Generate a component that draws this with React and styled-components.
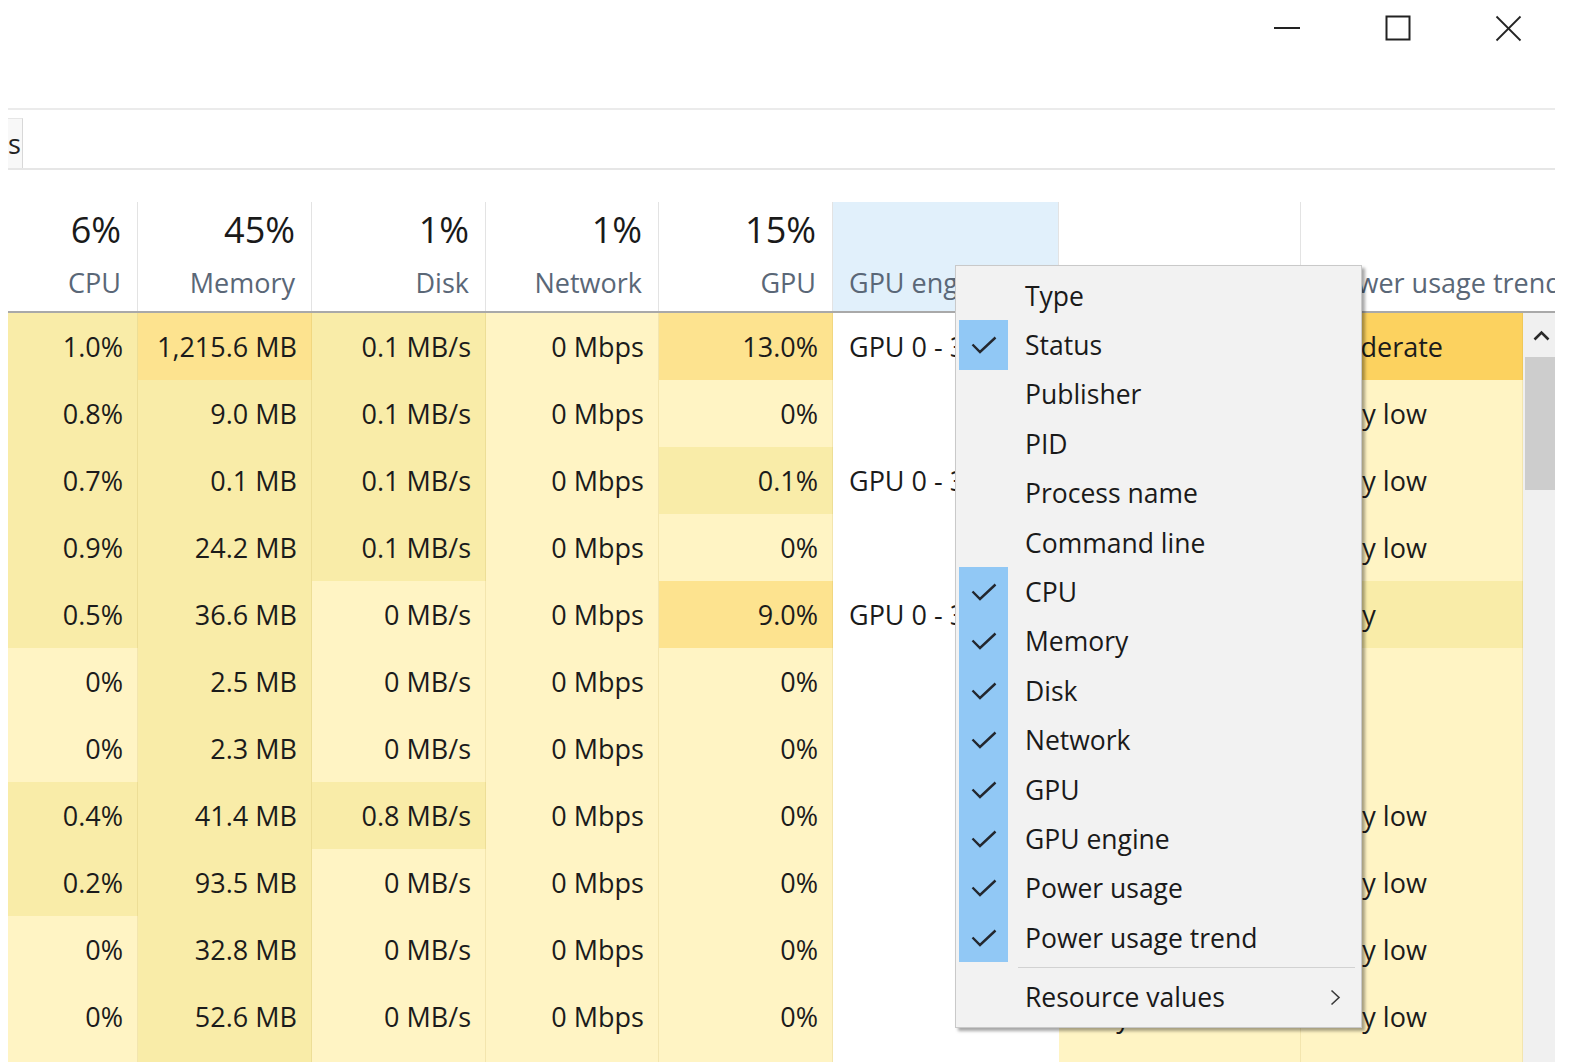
import React from "react";
import styled, { createGlobalStyle } from "styled-components";

const GlobalStyle = createGlobalStyle`
  html, body { margin: 0; padding: 0; background: #fff; width: 100%; height: 100%; overflow: hidden; }
  body { font-family: "Open Sans", "Noto Sans", sans-serif; color: #1b1b1b; }
  * { box-sizing: border-box; }
`;

const HEAT = ["#fff4c4", "#f9eca8", "#fde38f", "#fcd25f"];
const HEAD_COLS = "130px 174px 174px 173px 174px 226px 242px 254px";
const BODY_COLS = "130px 174px 174px 173px 174px 226px 242px 222px";

const Window = styled.div`
  position: relative;
  width: 1574px;
  height: 1062px;
  overflow: hidden;
  background: #fff;
`;

const TitleBar = styled.div`
  height: 108px;
  display: flex;
  justify-content: flex-end;
  align-items: flex-start;
  padding-right: 10px;
`;

const CaptionButton = styled.div`
  width: 111px;
  height: 56px;
  display: flex;
  align-items: center;
  justify-content: center;
  color: #1e1e1e;
`;

const Frame = styled.div`
  margin-left: 8px;
  width: 1547px;
`;

const Rule = styled.div`
  height: 2px;
  background: #ebebeb;
`;

const TabStrip = styled.div`
  height: 60px;
  padding-top: 8px;
  display: flex;
  border-bottom: 2px solid #e6e6e6;
`;

const Tab = styled.div`
  width: 15px;
  height: 50px;
  overflow: hidden;
  font-size: 27px;
  line-height: 50px;
  color: #222;
  background: #f8f8f8;
  border-right: 1px solid #d8d8d8;
  border-top: 1px solid #e6e6e6;
`;

const Header = styled.div`
  margin-top: 32px;
  display: grid;
  grid-template-columns: ${HEAD_COLS};
  height: 111px;
  border-bottom: 2px solid #a9a9a9;
  overflow: hidden;
`;

const HeaderCell = styled.div`
  display: flex;
  flex-direction: column;
  align-items: ${(p) => (p.$left ? "flex-start" : "flex-end")};
  padding: 6px ${(p) => (p.$left ? "0" : "16px")} 0 ${(p) => (p.$left ? p.$pad : 0)}px;
  border-right: ${(p) => (p.$last ? "none" : "1px solid #e3e3e3")};
  background: ${(p) => (p.$active ? "#e1f0fb" : "transparent")};
  overflow: hidden;
  white-space: nowrap;
`;

const Percent = styled.div`
  font-size: 36px;
  line-height: 44px;
  height: 44px;
  color: #1a1a1a;
`;

const Label = styled.div`
  font-size: 27px;
  line-height: 40px;
  margin-top: 11px;
  color: #5a6777;
`;

const Body = styled.div`
  display: flex;
`;

const Rows = styled.div`
  width: 1515px;
`;

const Row = styled.div`
  display: grid;
  grid-template-columns: ${BODY_COLS};
  height: 67px;
`;

const Cell = styled.div`
  display: flex;
  align-items: center;
  justify-content: ${(p) => (p.$left ? "flex-start" : "flex-end")};
  padding: 0 ${(p) => (p.$left ? 0 : 14)}px 0 ${(p) => (p.$left ? p.$pad : 0)}px;
  background: ${(p) => (p.$heat === null ? "#ffffff" : HEAT[p.$heat])};
  border-right: 1px solid ${(p) => (p.$heat === null ? "transparent" : "rgba(170, 145, 40, 0.14)")};
  font-size: 27px;
  color: #1b1b1b;
  white-space: nowrap;
  overflow: hidden;
`;

const Scrollbar = styled.div`
  width: 32px;
  background: #f0f0f0;
  display: flex;
  flex-direction: column;
  align-items: stretch;
`;

const ScrollArrow = styled.div`
  height: 44px;
  display: flex;
  align-items: center;
  justify-content: center;
  padding-left: 4px;
`;

const ScrollThumb = styled.div`
  height: 133px;
  margin-left: 2px;
  background: #cdcdcd;
`;

const Menu = styled.div`
  position: absolute;
  left: 955px;
  top: 265px;
  width: 407px;
  background: #f2f2f2;
  border: 1px solid #c9c9c9;
  box-shadow: 3px 3px 3px rgba(0, 0, 0, 0.35);
  padding: 5px 0 5px;
`;

const MenuItem = styled.div`
  height: 49.4px;
  display: flex;
  align-items: center;
  font-size: 26.5px;
  color: #1a1a1a;
`;

const CheckBox = styled.div`
  width: 49px;
  height: 100%;
  margin-left: 3px;
  background: ${(p) => (p.$on ? "#91c8f5" : "transparent")};
  display: flex;
  align-items: center;
  justify-content: center;
`;

const MenuLabel = styled.div`
  margin-left: 17px;
  flex: 1;
  white-space: nowrap;
`;

const SubArrow = styled.div`
  margin-right: 20px;
  display: flex;
  align-items: center;
`;

const MenuSeparator = styled.div`
  height: 10px;
  display: flex;
  align-items: center;
  padding: 0 6px 0 62px;
  &::after {
    content: "";
    flex: 1;
    height: 1px;
    background: #d2d2d2;
  }
`;

const columns = [
  { pct: "6%", label: "CPU" },
  { pct: "45%", label: "Memory" },
  { pct: "1%", label: "Disk" },
  { pct: "1%", label: "Network" },
  { pct: "15%", label: "GPU" },
  { label: "GPU engine", left: true, pad: 16, active: true },
  { label: "Power usage", left: true, pad: 15 },
  { label: "Power usage trend", left: true, pad: 19, headPad: 24, last: true },
];

const rows = [
  ["1.0%", "1,215.6 MB", "0.1 MB/s", "0 Mbps", "13.0%", "GPU 0 - 3D", "Low", "Moderate"],
  ["0.8%", "9.0 MB", "0.1 MB/s", "0 Mbps", "0%", "", "Very low", "Very low"],
  ["0.7%", "0.1 MB", "0.1 MB/s", "0 Mbps", "0.1%", "GPU 0 - 3D", "Very low", "Very low"],
  ["0.9%", "24.2 MB", "0.1 MB/s", "0 Mbps", "0%", "", "Very low", "Very low"],
  ["0.5%", "36.6 MB", "0 MB/s", "0 Mbps", "9.0%", "GPU 0 - 3D", "Very low", "Very"],
  ["0%", "2.5 MB", "0 MB/s", "0 Mbps", "0%", "", "", ""],
  ["0%", "2.3 MB", "0 MB/s", "0 Mbps", "0%", "", "", ""],
  ["0.4%", "41.4 MB", "0.8 MB/s", "0 Mbps", "0%", "", "Very low", "Very low"],
  ["0.2%", "93.5 MB", "0 MB/s", "0 Mbps", "0%", "", "Very low", "Very low"],
  ["0%", "32.8 MB", "0 MB/s", "0 Mbps", "0%", "", "Very low", "Very low"],
  ["0%", "52.6 MB", "0 MB/s", "0 Mbps", "0%", "", "Very low", "Very low"],
  ["0%", "3.1 MB", "0 MB/s", "0 Mbps", "0%", "", "Very low", "Very low"],
];

const heat = [
  [1, 2, 1, 0, 2, null, 0, 3],
  [1, 1, 1, 0, 0, null, 0, 0],
  [1, 1, 1, 0, 1, null, 0, 0],
  [1, 1, 1, 0, 0, null, 0, 0],
  [1, 1, 0, 0, 2, null, 0, 1],
  [0, 1, 0, 0, 0, null, 0, 0],
  [0, 1, 0, 0, 0, null, 0, 0],
  [1, 1, 1, 0, 0, null, 0, 0],
  [1, 1, 0, 0, 0, null, 0, 0],
  [0, 1, 0, 0, 0, null, 0, 0],
  [0, 1, 0, 0, 0, null, 0, 0],
  [0, 1, 0, 0, 0, null, 0, 0],
];

const menuItems = [
  ["Type", false],
  ["Status", true],
  ["Publisher", false],
  ["PID", false],
  ["Process name", false],
  ["Command line", false],
  ["CPU", true],
  ["Memory", true],
  ["Disk", true],
  ["Network", true],
  ["GPU", true],
  ["GPU engine", true],
  ["Power usage", true],
  ["Power usage trend", true],
];

const Check = () => (
  <svg width="26" height="18" viewBox="0 0 26 18">
    <polyline points="1.5,8.5 9,16 24.5,1.5" fill="none" stroke="#23272e" strokeWidth="2.4" />
  </svg>
);

export default function App() {
  return (
    <Window>
      <GlobalStyle />
      <TitleBar>
        <CaptionButton>
          <svg width="26" height="4" viewBox="0 0 26 4">
            <line x1="0" y1="2" x2="26" y2="2" stroke="#222" strokeWidth="2" />
          </svg>
        </CaptionButton>
        <CaptionButton>
          <svg width="26" height="26" viewBox="0 0 26 26">
            <rect x="1.5" y="1.5" width="23" height="23" fill="none" stroke="#222" strokeWidth="2" />
          </svg>
        </CaptionButton>
        <CaptionButton>
          <svg width="27" height="27" viewBox="0 0 27 27">
            <line x1="1.5" y1="1.5" x2="25.5" y2="25.5" stroke="#222" strokeWidth="1.8" />
            <line x1="25.5" y1="1.5" x2="1.5" y2="25.5" stroke="#222" strokeWidth="1.8" />
          </svg>
        </CaptionButton>
      </TitleBar>
      <Frame>
        <Rule />
        <TabStrip>
          <Tab>s</Tab>
        </TabStrip>
        <Header>
          {columns.map((c, i) => (
            <HeaderCell
              key={i}
              $left={c.left}
              $pad={c.headPad || c.pad}
              $active={c.active}
              $last={c.last}
            >
              <Percent>{c.pct || ""}</Percent>
              <Label>{c.label}</Label>
            </HeaderCell>
          ))}
        </Header>
        <Body>
          <Rows>
            {rows.map((r, ri) => (
              <Row key={ri}>
                {r.map((v, ci) => (
                  <Cell
                    key={ci}
                    $heat={heat[ri][ci]}
                    $left={columns[ci].left}
                    $pad={columns[ci].pad}
                  >
                    {v}
                  </Cell>
                ))}
              </Row>
            ))}
          </Rows>
          <Scrollbar>
            <ScrollArrow>
              <svg width="17" height="11" viewBox="0 0 17 11">
                <polyline points="1.5,9.5 8.5,2.5 15.5,9.5" fill="none" stroke="#2a2a2a" strokeWidth="2.6" />
              </svg>
            </ScrollArrow>
            <ScrollThumb />
          </Scrollbar>
        </Body>
      </Frame>
      <Menu>
        {menuItems.map(([label, on]) => (
          <MenuItem key={label}>
            <CheckBox $on={on}>{on && <Check />}</CheckBox>
            <MenuLabel>{label}</MenuLabel>
          </MenuItem>
        ))}
        <MenuSeparator />
        <MenuItem>
          <CheckBox $on={false} />
          <MenuLabel>Resource values</MenuLabel>
          <SubArrow>
            <svg width="11" height="17" viewBox="0 0 11 17">
              <polyline points="1.5,1.5 9,8.5 1.5,15.5" fill="none" stroke="#3a3a3a" strokeWidth="1.6" />
            </svg>
          </SubArrow>
        </MenuItem>
      </Menu>
    </Window>
  );
}
